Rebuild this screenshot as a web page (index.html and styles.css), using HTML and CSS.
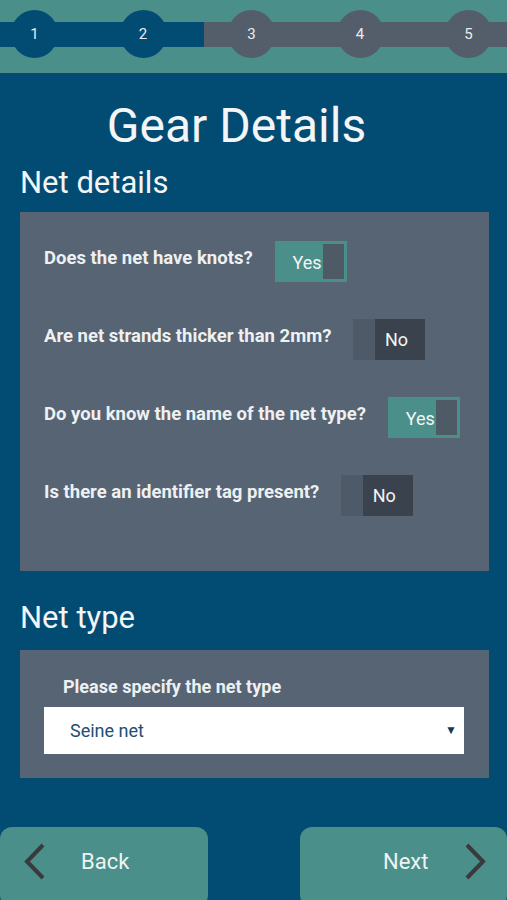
FILE: index.html
```html
<!DOCTYPE html>
<html lang="en">
<head>
<meta charset="utf-8">
<title>Gear Details</title>
<link rel="stylesheet" href="styles.css">
</head>
<body>
<div class="page">
  <div class="stepper">
    <div class="step done">1</div>
    <div class="step done">2</div>
    <div class="step">3</div>
    <div class="step">4</div>
    <div class="step">5</div>
  </div>

  <h1 class="title">Gear Details</h1>

  <h2 class="section-title">Net details</h2>
  <div class="panel questions">
    <div class="question">
      <span class="q-label">Does the net have knots?</span>
      <div class="toggle on"><span class="t-text">Yes</span><span class="t-knob"></span></div>
    </div>
    <div class="question">
      <span class="q-label">Are net strands thicker than 2mm?</span>
      <div class="toggle off"><span class="t-knob"></span><span class="t-text">No</span></div>
    </div>
    <div class="question">
      <span class="q-label">Do you know the name of the net type?</span>
      <div class="toggle on"><span class="t-text">Yes</span><span class="t-knob"></span></div>
    </div>
    <div class="question">
      <span class="q-label">Is there an identifier tag present?</span>
      <div class="toggle off"><span class="t-knob"></span><span class="t-text">No</span></div>
    </div>
  </div>

  <h2 class="section-title type-title">Net type</h2>
  <div class="panel type-panel">
    <div class="field-label">Please specify the net type</div>
    <div class="select"><span class="select-value">Seine net</span><span class="select-arrow">&#9660;</span></div>
  </div>

  <div class="footer">
    <div class="nav-btn back">
      <svg class="chev" width="24" height="40" viewBox="0 0 24 40"><polyline points="20,3 4,19.5 20,36" fill="none" stroke="#3a3a3c" stroke-width="4"/></svg>
      <span class="nav-text">Back</span>
    </div>
    <div class="nav-btn next">
      <span class="nav-text">Next</span>
      <svg class="chev" width="24" height="40" viewBox="0 0 24 40"><polyline points="4,3 20,19.5 4,36" fill="none" stroke="#3a3a3c" stroke-width="4"/></svg>
    </div>
  </div>
</div>
</body>
</html>
```
FILE: styles.css
```css
* { box-sizing: border-box; }
html, body {
  margin: 0;
  padding: 0;
}
body {
  background: #024c74;
  font-family: Roboto, "Noto Sans", "Liberation Sans", sans-serif;
  color: #f2f4f5;
  height: 900px;
  overflow: hidden;
}
.page {
  display: flex;
  flex-direction: column;
  height: 900px;
}
.page > * { flex-shrink: 0; }

/* stepper */
.stepper {
  height: 73px;
  display: flex;
  align-items: flex-start;
  justify-content: space-between;
  padding: 10px 15px 0 11px;
  background-color: #4a8f89;
  background-image: linear-gradient(to right, #024c74 204px, #545e6b 204px);
  background-size: 100% 25px;
  background-position: 0 22px;
  background-repeat: no-repeat;
}
.step {
  width: 47px;
  height: 48px;
  border-radius: 50%;
  background: #545e6b;
  display: flex;
  align-items: center;
  justify-content: center;
  font-size: 15px;
  color: #e9edf0;
}
.step.done { background: #024c74; }

/* headings */
.title {
  margin: 25px 34px 0 0;
  font-size: 48px;
  line-height: 56px;
  font-weight: 400;
  text-align: center;
  color: #f3f5f6;
}
.section-title {
  margin: 11px 0 0 20px;
  font-size: 31px;
  line-height: 36px;
  font-weight: 400;
  color: #f3f5f6;
}
.type-title { margin-top: 29px; }

/* panels */
.panel {
  margin: 11px 18px 0 20px;
  background: #566474;
}
.questions {
  height: 359px;
  padding: 29px 24px 0 24px;
  display: flex;
  flex-direction: column;
  gap: 37px;
}
.question {
  display: flex;
  align-items: center;
  gap: 22px;
}
.q-label {
  font-size: 18.5px;
  font-weight: 700;
  line-height: 22px;
  margin-bottom: 7px;
  color: #eef0f2;
}
.toggle {
  display: flex;
  width: 72px;
  height: 41px;
  flex-shrink: 0;
}
.toggle.on {
  background: #4a8f89;
  border: 2px solid #4a9089;
  padding: 1px 1px 1px 0;
}
.toggle.on .t-text {
  flex: 1;
  text-align: right;
  padding-right: 1px;
}
.toggle.on .t-knob {
  width: 21px;
  background: #4f5a67;
}
.t-text {
  font-size: 18px;
  line-height: 37px;
  color: #f3f5f6;
}
.toggle.off { background: #3a434d; }
.toggle.off .t-knob {
  width: 22px;
  background: #4e5a67;
}
.toggle.off .t-text {
  flex: 1;
  text-align: center;
  padding-right: 8px;
  line-height: 41px;
}

.type-panel {
  margin-top: 14px;
  height: 128px;
  padding: 26px 25px 0 24px;
}
.field-label {
  font-size: 18px;
  font-weight: 700;
  line-height: 21px;
  padding-left: 19px;
  color: #eef0f2;
}
.select {
  margin-top: 10px;
  height: 47px;
  background: #ffffff;
  display: flex;
  align-items: center;
  justify-content: space-between;
  padding: 0 7px 0 26px;
}
.select-value {
  font-size: 18px;
  color: #1c4f73;
}
.select-arrow {
  font-size: 12px;
  color: #0f3c5c;
  margin-bottom: 2px;
}

/* footer */
.footer {
  margin-top: 49px;
  display: flex;
  justify-content: space-between;
}
.nav-btn {
  width: 208px;
  height: 80px;
  background: #4a8f89;
  border-radius: 12px;
  display: flex;
  align-items: flex-start;
  padding-top: 15px;
}
.nav-btn.next { width: 207px; }
.nav-text {
  font-size: 22px;
  line-height: 40px;
  color: #eef3f3;
}
.back { padding-left: 23px; }
.back .nav-text { margin-left: 34px; }
.next { padding-left: 83px; }
.next .nav-text { margin-right: 35px; }
```
